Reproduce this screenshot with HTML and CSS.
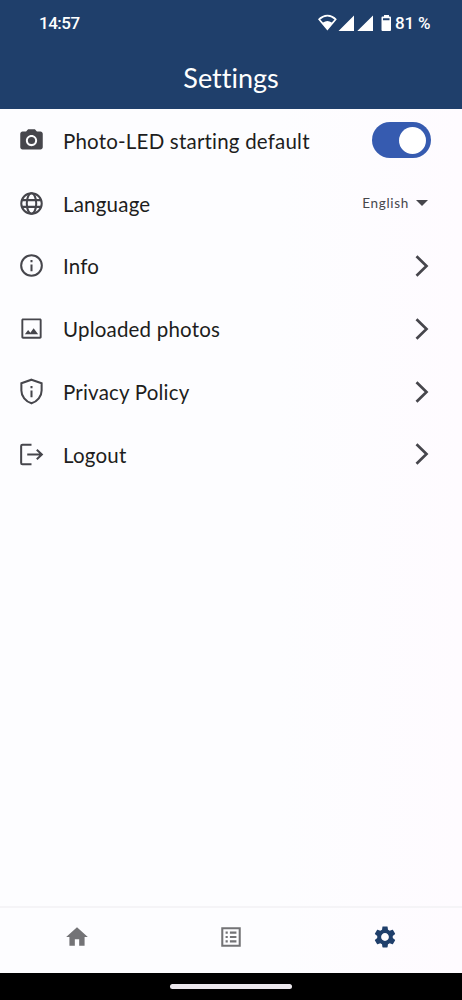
FILE: index.html
```html
<!DOCTYPE html>
<html lang="en">
<head>
<meta charset="utf-8">
<title>Settings</title>
<link rel="stylesheet" href="styles.css">
</head>
<body>
<div class="screen">
  <header class="header">
    <div class="status">
      <span class="time">14:57</span>
      <svg class="indicators" viewBox="0 0 74 18" fill="#fff">
        <path fill-rule="evenodd" d="M0 5.200C5-.8 14-.8 18.800 5.200L9.400 16.600ZM2.300 5.400L5 8.600Q9.400 5.400 13.800 8.600L16.500 5.400Q9.400-.6 2.300 5.400Z"/>
        <path d="M20.500 17L36 1.500V17ZM39.300 17L55 1.500V17Z"/>
        <path fill-rule="evenodd" d="M66 1h5v1.500h1q1 0 1 1V16q0 1-1 1h-7.500q-1 0-1-1V3.500q0-1 1-1H66ZM65 4.200V6.200H71.500V4.200Z"/>
      </svg>
      <span class="battery">81 %</span>
    </div>
    <h1 class="title">Settings</h1>
  </header>
  <main class="list">
    <div class="row">
      <svg class="icon" viewBox="0 0 24 24"><path fill-rule="evenodd" d="M9 2 7.170 4H4c-1.100 0-2 .9-2 2v12c0 1.100.9 2 2 2h16c1.100 0 2-.9 2-2V6c0-1.100-.9-2-2-2h-3.170L15 2H9zm3 15c-2.760 0-5-2.240-5-5s2.240-5 5-5 5 2.240 5 5-2.240 5-5 5z"/><circle cx="12" cy="12" r="3.200"/></svg>
      <span class="label">Photo-LED starting default</span>
      <span class="switch"><span class="knob"></span></span>
    </div>
    <div class="row">
      <svg class="icon line" viewBox="0 0 24 24"><circle cx="12" cy="12" r="9.100"/><ellipse cx="12" cy="12" rx="4.200" ry="9.100"/><path d="M3.500 9h17M3.500 15h17"/></svg>
      <span class="label">Language</span>
      <span class="select"><span class="value">English</span><svg class="caret" viewBox="0 0 12 6"><path d="M0 0h12L6 6z"/></svg></span>
    </div>
    <div class="row">
      <svg class="icon line" viewBox="0 0 24 24"><circle cx="12" cy="12" r="9.200"/><path d="M12 11v6M12 7v2"/></svg>
      <span class="label">Info</span>
      <svg class="chevron" viewBox="0 0 14 22"><path d="M1.500 1.200 11.500 11l-10 9.800"/></svg>
    </div>
    <div class="row">
      <svg class="icon" viewBox="0 0 24 24"><path d="M19.300 4.700v14.600H4.700V4.700h14.600m.2-1.700H4.500C3.600 3 3 3.600 3 4.500v15c0 .9.600 1.500 1.500 1.500h15c.9 0 1.500-.6 1.500-1.500v-15c0-.9-.6-1.500-1.500-1.500z"/><path d="M6.100 17l2.900-3.700 2 2.400 2.900-3.900 4 5.200z"/></svg>
      <span class="label">Uploaded photos</span>
      <svg class="chevron" viewBox="0 0 14 22"><path d="M1.500 1.200 11.500 11l-10 9.800"/></svg>
    </div>
    <div class="row">
      <svg class="icon line" viewBox="0 0 24 24"><path d="M12 1.500 21 4.600V11c0 5.200-3.700 9.800-9 11.500-5.300-1.700-9-6.300-9-11.500V4.600ZM12 11v6M12 7.200v2"/></svg>
      <span class="label">Privacy Policy</span>
      <svg class="chevron" viewBox="0 0 14 22"><path d="M1.500 1.200 11.500 11l-10 9.800"/></svg>
    </div>
    <div class="row">
      <svg class="icon line" viewBox="0 0 24 24"><path d="M12 3.300H4a1.200 1.200 0 0 0-1.200 1.200v15a1.200 1.200 0 0 0 1.200 1.200H12M8.200 12H21M16.700 7.700 21.200 12l-4.500 4.300"/></svg>
      <span class="label">Logout</span>
      <svg class="chevron" viewBox="0 0 14 22"><path d="M1.500 1.200 11.500 11l-10 9.800"/></svg>
    </div>
  </main>
  <nav class="tabs">
    <span class="tab"><svg viewBox="0 0 24 24"><path d="M10 20v-6h4v6h5v-8h3L12 3 2 12h3v8z"/></svg></span>
    <span class="tab"><svg viewBox="0 0 24 24"><path fill-rule="evenodd" d="M3 3h18v18H3zM4.900 4.900V19.100H19.100V4.900z"/><path d="M7 7h2v2H7zM11 7h6v2h-6zM7 11h2v2H7zM11 11h6v2h-6zM7 15h2v2H7zM11 15h6v2h-6z"/></svg></span>
    <span class="tab active"><svg viewBox="0 0 24 24"><path d="M19.140 12.940c.04-.3.060-.61.060-.94 0-.32-.02-.64-.07-.94l2.030-1.580c.18-.14.230-.41.120-.61l-1.920-3.320c-.12-.22-.37-.29-.59-.22l-2.390.96c-.5-.38-1.030-.7-1.620-.94l-.36-2.540c-.04-.24-.24-.41-.48-.41h-3.840c-.24 0-.43.170-.47.410l-.36 2.540c-.59.240-1.130.570-1.620.940l-2.390-.96c-.22-.08-.47 0-.59.220L2.740 8.870c-.12.210-.08.470.12.610l2.030 1.580c-.05.300-.09.630-.09.940s.02.640.070.940l-2.030 1.580c-.18.140-.23.410-.12.610l1.920 3.320c.12.220.37.290.59.220l2.390-.96c.5.380 1.030.7 1.620.94l.36 2.540c.05.240.24.410.48.410h3.840c.24 0 .44-.17.47-.41l.36-2.540c.59-.24 1.130-.56 1.620-.94l2.390.96c.22.080.47 0 .59-.22l1.920-3.320c.12-.22.070-.47-.12-.61l-2.010-1.580zM12 15.600c-1.980 0-3.600-1.620-3.600-3.600s1.620-3.600 3.600-3.600 3.600 1.620 3.600 3.600-1.620 3.600-3.600 3.600z"/></svg></span>
  </nav>
  <div class="gesture"><span class="handle"></span></div>
</div>
</body>
</html>
```
FILE: styles.css
```css
* { box-sizing: border-box; }
body { margin: 0; font-family: Lato, "Liberation Sans", sans-serif; }
.screen {
  width: 462px;
  height: 1000px;
  display: flex;
  flex-direction: column;
  overflow: hidden;
  background: linear-gradient(90deg, #fdfdff 0%, #fdfdff 60%, #fefbff 100%);
}
.header {
  flex: none;
  height: 109px;
  background: #1f3f6b;
  color: #fff;
}
.status {
  height: 46px;
  padding: 0 32px 0 39px;
  display: flex;
  align-items: center;
  font-family: Roboto, sans-serif;
  font-size: 17px;
  font-weight: 500;
  line-height: 20px;
}
.time { flex: 1; letter-spacing: -0.5px; }
.indicators { width: 74px; height: 18px; margin-right: 3px; }
.battery { width: 35px; white-space: nowrap; letter-spacing: -0.2px; }
.title {
  margin: 14px 0 0;
  font-size: 27px;
  font-weight: 400;
  font-variant-ligatures: none;
  line-height: 36px;
  text-align: center;
}
.list { flex: 1; }
.row {
  height: 62.8px;
  padding: 0 31px 0 18px;
  display: flex;
  align-items: center;
}
.icon { flex: none; width: 27px; height: 27px; fill: #46464c; }
.line { fill: none; stroke: #46464c; stroke-width: 1.800; }
.label {
  flex: 1;
  margin-left: 18px;
  padding-top: 1px;
  color: #1d1d20;
  font-size: 20.500px;
  letter-spacing: 0.200px;
  white-space: nowrap;
}
.switch {
  width: 59px;
  height: 36px;
  padding: 4.500px 5px;
  border-radius: 18px;
  display: flex;
  justify-content: flex-end;
  background: #365bb0;
}
.knob { width: 27px; height: 27px; border-radius: 50%; background: #fff; }
.select {
  display: flex;
  align-items: center;
  gap: 7px;
  margin-right: 3px;
  color: #46464c;
  font-size: 13.500px;
  letter-spacing: 0.700px;
}
.value { padding-bottom: 1px; }
.caret { width: 12px; height: 6px; fill: #46464c; }
.chevron {
  width: 14px;
  height: 22px;
  margin-right: 2px;
  fill: none;
  stroke: #46464c;
  stroke-width: 2.700;
}
.tabs {
  flex: none;
  height: 67px;
  padding-bottom: 7px;
  border-top: 2px solid #f5f4f7;
  display: flex;
}
.tab { flex: 1; display: flex; align-items: center; justify-content: center; }
.tab svg { width: 26px; height: 26px; fill: #737376; }
.active svg { fill: #1f3f6b; }
.gesture {
  flex: none;
  height: 27px;
  background: #000;
  display: flex;
  align-items: center;
  justify-content: center;
}
.handle { width: 122px; height: 5px; border-radius: 3px; background: #ece8ed; }
```
